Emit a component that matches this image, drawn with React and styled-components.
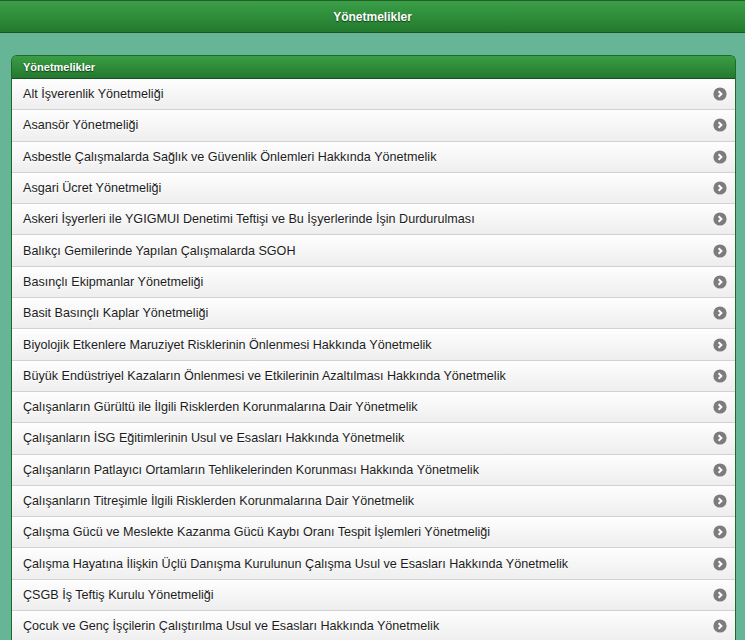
import styled, { createGlobalStyle } from 'styled-components';

const items = [
  'Alt İşverenlik Yönetmeliği',
  'Asansör Yönetmeliği',
  'Asbestle Çalışmalarda Sağlık ve Güvenlik Önlemleri Hakkında Yönetmelik',
  'Asgari Ücret Yönetmeliği',
  'Askeri İşyerleri ile YGIGMUI Denetimi Teftişi ve Bu İşyerlerinde İşin Durdurulması',
  'Balıkçı Gemilerinde Yapılan Çalışmalarda SGOH',
  'Basınçlı Ekipmanlar Yönetmeliği',
  'Basit Basınçlı Kaplar Yönetmeliği',
  'Biyolojik Etkenlere Maruziyet Risklerinin Önlenmesi Hakkında Yönetmelik',
  'Büyük Endüstriyel Kazaların Önlenmesi ve Etkilerinin Azaltılması Hakkında Yönetmelik',
  'Çalışanların Gürültü ile İlgili Risklerden Korunmalarına Dair Yönetmelik',
  'Çalışanların İSG Eğitimlerinin Usul ve Esasları Hakkında Yönetmelik',
  'Çalışanların Patlayıcı Ortamların Tehlikelerinden Korunması Hakkında Yönetmelik',
  'Çalışanların Titreşimle İlgili Risklerden Korunmalarına Dair Yönetmelik',
  'Çalışma Gücü ve Meslekte Kazanma Gücü Kaybı Oranı Tespit İşlemleri Yönetmeliği',
  'Çalışma Hayatına İlişkin Üçlü Danışma Kurulunun Çalışma Usul ve Esasları Hakkında Yönetmelik',
  'ÇSGB İş Teftiş Kurulu Yönetmeliği',
  'Çocuk ve Genç İşçilerin Çalıştırılma Usul ve Esasları Hakkında Yönetmelik',
];

const GlobalStyle = createGlobalStyle`
  html, body {
    margin: 0;
    padding: 0;
    background: #67b597;
    font-family: "Liberation Sans", Arial, sans-serif;
    overflow: hidden;
  }
`;

const Page = styled.div`
  min-height: 640px;
  background: #67b597;
`;

const TopBar = styled.div`
  height: 31px;
  display: flex;
  align-items: center;
  justify-content: center;
  background: linear-gradient(#3b9f47, #237a2e);
  border-top: 1px solid #1d5f26;
  border-bottom: 1px solid #1a5522;
  color: #fff;
  font-size: 12px;
  font-weight: bold;
  text-shadow: 0 1px 1px #103d16;
`;

const Content = styled.div`
  padding: 22px 9px 0 11px;
`;

const Panel = styled.div`
  border-radius: 6px 6px 0 0;
  overflow: hidden;
  border: 1px solid #1e6a28;
  border-bottom: none;
`;

const PanelHeader = styled.div`
  height: 22px;
  padding-left: 11px;
  display: flex;
  align-items: center;
  background: linear-gradient(#3a9e45, #24792e);
  border-bottom: 1px solid #175020;
  color: #fff;
  font-size: 11px;
  font-weight: bold;
  text-shadow: 0 1px 1px #0f3a15;
`;

const Row = styled.div`
  height: 30.3px;
  display: flex;
  align-items: center;
  justify-content: space-between;
  padding: 0 8px 0 11px;
  background: linear-gradient(#fefefe, #eeeeee);
  border-top: 1px solid #d2d2d2;
  color: #1c1c1c;
  font-size: 12.6px;
  text-shadow: 0 1px 0 #fff;
  &:first-child {
    border-top: none;
  }
`;

const Arrow = () => (
  <svg width="14" height="14" viewBox="0 0 14 14">
    <circle cx="7" cy="7" r="6.6" fill="#7c7c7c" />
    <path d="M5.6 4.2 L8.4 7 L5.6 9.8" fill="none" stroke="#fff" strokeWidth="2" />
  </svg>
);

export default function App() {
  return (
    <Page>
      <GlobalStyle />
      <TopBar>Yönetmelikler</TopBar>
      <Content>
        <Panel>
          <PanelHeader>Yönetmelikler</PanelHeader>
          <div>
            {items.map(t => (
              <Row key={t}>
                <span>{t}</span>
                <Arrow />
              </Row>
            ))}
          </div>
        </Panel>
      </Content>
    </Page>
  );
}
